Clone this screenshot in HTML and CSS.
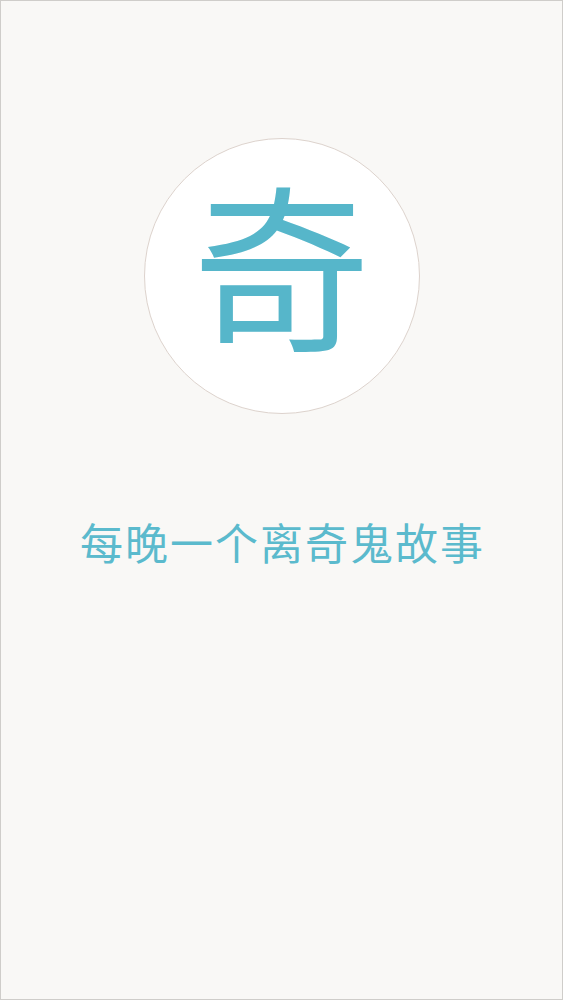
FILE: index.html
```html
<!DOCTYPE html>
<html lang="zh">
<head>
<meta charset="utf-8">
<link rel="stylesheet" href="styles.css">
</head>
<body>
<div class="screen">
  <div class="logo"><span class="logo-char">奇</span></div>
  <p class="slogan">每晚一个离奇鬼故事</p>
</div>
</body>
</html>
```
FILE: styles.css
```css
html, body {
  margin: 0;
  padding: 0;
}
body {
  background: #f9f8f6;
  font-family: "Noto Sans CJK SC", "Noto Sans", sans-serif;
}
.screen {
  box-sizing: border-box;
  width: 563px;
  height: 1000px;
  border: 1px solid #cfcdca;
  display: flex;
  flex-direction: column;
  align-items: center;
  background: #f9f8f6;
}
.logo {
  margin-top: 137px;
  width: 276px;
  height: 276px;
  box-sizing: border-box;
  border: 1px solid #ddd3cd;
  border-radius: 50%;
  background: #ffffff;
  display: flex;
  align-items: center;
  justify-content: center;
}
.logo-char {
  font-size: 178px;
  line-height: 1;
  color: #56b6ca;
  font-weight: 400;
  transform: translateY(-15px);
}
.slogan {
  margin: 106px 0 0 0;
  font-size: 43px;
  line-height: 1;
  letter-spacing: 2px;
  color: #5bbacd;
  font-weight: 400;
  padding-left: 2px;
}
```
